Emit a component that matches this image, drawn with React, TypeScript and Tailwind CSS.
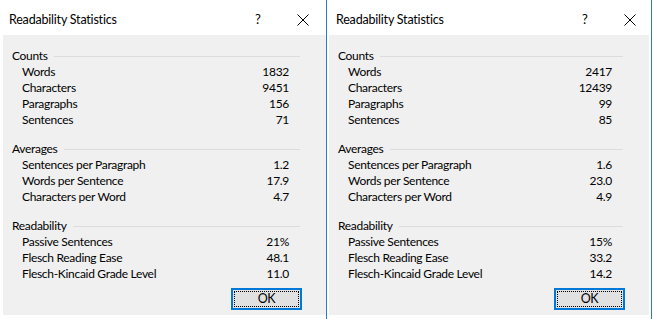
import React from "react";

type Row = [string, string];
type Section = { title: string; rows: Row[] };

const left: Section[] = [
  { title: "Counts", rows: [["Words", "1832"], ["Characters", "9451"], ["Paragraphs", "156"], ["Sentences", "71"]] },
  { title: "Averages", rows: [["Sentences per Paragraph", "1.2"], ["Words per Sentence", "17.9"], ["Characters per Word", "4.7"]] },
  { title: "Readability", rows: [["Passive Sentences", "21%"], ["Flesch Reading Ease", "48.1"], ["Flesch-Kincaid Grade Level", "11.0"]] },
];
const right: Section[] = [
  { title: "Counts", rows: [["Words", "2417"], ["Characters", "12439"], ["Paragraphs", "99"], ["Sentences", "85"]] },
  { title: "Averages", rows: [["Sentences per Paragraph", "1.6"], ["Words per Sentence", "23.0"], ["Characters per Word", "4.9"]] },
  { title: "Readability", rows: [["Passive Sentences", "15%"], ["Flesch Reading Ease", "33.2"], ["Flesch-Kincaid Grade Level", "14.2"]] },
];

function Dialog({ sections, bodyMl, bodyMr, width }: { sections: Section[]; bodyMl: string; bodyMr: string; width: string }) {
  return (
    <div className={`${width} flex flex-col bg-white shrink-0`}>
      <div className="h-[35px] flex items-center pl-[9px] pt-[6px] relative">
        <span className="text-[12.5px] tracking-[-0.2px] text-black">Readability Statistics</span>
        <span className="absolute left-[255px] top-[13px] text-[13px] text-black">?</span>
        <svg className="absolute left-[297px] top-[14px]" width="12" height="12" viewBox="0 0 12 12">
          <path d="M0.5 0.5 L11.5 11.5 M11.5 0.5 L0.5 11.5" stroke="#000" strokeWidth="1" fill="none" />
        </svg>
      </div>
      <div className={`bg-[#f0f0f0] ${bodyMl} ${bodyMr} h-[280px] pt-[12px] flex flex-col gap-[13px]`}>
        {sections.map((s) => (
          <div key={s.title} className="flex flex-col">
            <div className="h-[16px] flex items-center pl-[9px] pr-[26px] pt-[2px]">
              <span className="text-black">{s.title}</span>
              <div className="flex-1 h-px bg-[#dcdcdc] ml-[6px]" />
            </div>
            {s.rows.map(([k, v]) => (
              <div key={k} className="h-[16px] flex items-center justify-between pl-[19px] pr-[37px] pt-[2px]">
                <span className="text-black">{k}</span>
                <span className="text-black">{v}</span>
              </div>
            ))}
          </div>
        ))}
        <div className="flex justify-end pr-[24px] -mt-[6px]">
          <div className="w-[71px] h-[22px] border-2 border-[#0078d7] bg-[#e1e1e1] p-px">
            <div className="w-full h-full border border-dotted border-black flex items-center justify-center text-black text-[12.5px]">OK</div>
          </div>
        </div>
      </div>
    </div>
  );
}

export default function App() {
  return (
    <div
      className="w-[653px] h-[319px] bg-white flex text-[12px] tracking-[-0.3px] leading-none"
      style={{ fontFamily: 'Lato, "Noto Sans", sans-serif' }}
    >
      <Dialog sections={left} bodyMl="ml-[3px]" bodyMr="mr-0" width="w-[326px]" />
      <div className="w-px h-full bg-[#2b79d0]" />
      <Dialog sections={right} bodyMl="ml-[2px]" bodyMr="mr-[2px]" width="w-[324px]" />
      <div className="w-px h-full bg-[#2b79d0]" />
      <div className="w-px h-full bg-white" />
    </div>
  );
}
